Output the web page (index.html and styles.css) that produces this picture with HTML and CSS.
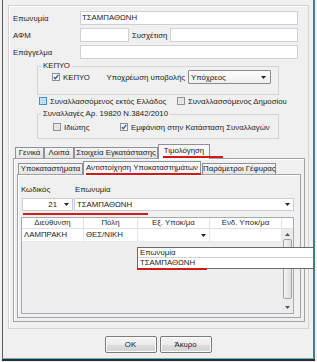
FILE: index.html
```html
<!DOCTYPE html>
<html lang="el">
<head>
<meta charset="utf-8">
<title>Συναλλασσόμενος</title>
<link rel="stylesheet" href="styles.css">
</head>
<body>
<div class="window">
  <div class="panel">
    <div class="frow">
      <span class="lbl">Επωνυμία</span>
      <div class="input w-full">ΤΣΑΜΠΑΘΩΝΗ</div>
    </div>
    <div class="frow">
      <span class="lbl">ΑΦΜ</span>
      <div class="input w-afm"></div>
      <span class="lbl-sys">Συσχέτιση</span>
      <div class="input w-sys"></div>
    </div>
    <div class="frow">
      <span class="lbl">Επάγγελμα</span>
      <div class="input w-full"></div>
    </div>

    <fieldset class="group group-kepyo">
      <legend>ΚΕΠΥΟ</legend>
      <div class="grow grow-kepyo">
        <span class="chk">
          <svg class="cb" width="8" height="8" viewBox="0 0 8 8"><rect x="0.5" y="0.5" width="7" height="7" fill="#f7f7f7" stroke="#8e8f8f"/><path d="M1.8 4.1L3.3 5.7L6.3 1.9" fill="none" stroke="#2c56a8" stroke-width="1.3"/></svg>
          <span>ΚΕΠΥΟ</span>
        </span>
        <span class="obl-lbl">Υποχρέωση υποβολής</span>
        <div class="select"><span>Υπόχρεος</span><svg class="arr" width="5" height="3" viewBox="0 0 5 3"><path d="M0 0H5L2.5 3z" fill="#222"/></svg></div>
      </div>
    </fieldset>

    <div class="crow">
      <span class="chk chk-wide">
        <svg class="cb" width="8" height="8" viewBox="0 0 8 8"><rect x="0.5" y="0.5" width="7" height="7" fill="#cfeafa" stroke="#4a8cc4"/><rect x="1.5" y="1.5" width="5" height="5" fill="#b8def5"/></svg>
        <span>Συναλλασσόμενος εκτός Ελλάδος</span>
      </span>
      <span class="chk">
        <svg class="cb" width="8" height="8" viewBox="0 0 8 8"><rect x="0.5" y="0.5" width="7" height="7" fill="#f4f4f4" stroke="#8e8f8f"/><rect x="1.5" y="1.5" width="5" height="5" fill="#e2e2e2"/></svg>
        <span>Συναλλασσόμενος Δημοσίου</span>
      </span>
    </div>

    <fieldset class="group group-syn">
      <legend>Συναλλαγές Αρ. 19820 Ν.3842/2010</legend>
      <div class="grow grow-syn">
        <span class="chk chk-idiotis">
          <svg class="cb" width="8" height="8" viewBox="0 0 8 8"><rect x="0.5" y="0.5" width="7" height="7" fill="#f4f4f4" stroke="#8e8f8f"/><rect x="1.5" y="1.5" width="5" height="5" fill="#e2e2e2"/></svg>
          <span>Ιδιώτης</span>
        </span>
        <span class="chk">
          <svg class="cb" width="8" height="8" viewBox="0 0 8 8"><rect x="0.5" y="0.5" width="7" height="7" fill="#f7f7f7" stroke="#8e8f8f"/><path d="M1.8 4.1L3.3 5.7L6.3 1.9" fill="none" stroke="#2c56a8" stroke-width="1.3"/></svg>
          <span>Εμφάνιση στην Κατάσταση Συναλλαγών</span>
        </span>
      </div>
    </fieldset>

    <div class="tabctl">
      <div class="tabs">
        <div class="tab t-gen">Γενικά</div>
        <div class="tab t-loipa">Λοιπά</div>
        <div class="tab t-stoix">Στοιχεία Εγκατάστασης</div>
        <div class="tab sel t-timol">Τιμολόγηση<span class="mark mark-timol"></span></div>
      </div>
      <div class="page page1">
        <div class="tabs tabs2">
          <div class="tab t-ypok">Υποκαταστήματα</div>
          <div class="tab sel t-antist">Αντιστοίχηση Υποκαταστημάτων<span class="mark mark-antist"></span></div>
          <div class="tab t-param">Παράμετροι Γέφυρας</div>
        </div>
        <div class="page page2">
          <div class="lrow">
            <span class="l-code">Κωδικός</span>
            <span>Επωνυμία</span>
          </div>
          <div class="combos">
            <div class="combo c-code"><span>21</span><svg class="arr" width="5" height="3" viewBox="0 0 5 3"><path d="M0 0H5L2.5 3z" fill="#222"/></svg></div>
            <div class="combo c-name"><span>ΤΣΑΜΠΑΘΩΝΗ</span><svg class="arr" width="5" height="3" viewBox="0 0 5 3"><path d="M0 0H5L2.5 3z" fill="#222"/></svg></div>
            <span class="mark mark-combo"></span>
          </div>
          <div class="grid">
            <div class="gmain">
              <div class="ghead">
                <div class="gc c1">Διεύθυνση</div>
                <div class="gc c2">Πόλη</div>
                <div class="gc c3">Εξ. Υποκ/μα</div>
                <div class="gc c4">Ενδ. Υποκ/μα</div>
              </div>
              <div class="grow-data">
                <div class="gd c1">ΛΑΜΠΡΑΚΗ</div>
                <div class="gd c2">ΘΕΣ/ΝΙΚΗ</div>
                <div class="gd c3 gd-combo"><svg class="arr" width="5" height="3" viewBox="0 0 5 3"><path d="M0 0H5L2.5 3z" fill="#222"/></svg></div>
                <div class="gd c4"></div>
              </div>
            </div>
            <div class="gsb">
              <div class="sb-head"></div>
              <div class="sb-btn"><svg width="5" height="3" viewBox="0 0 5 3"><path d="M0 3L2.5 0L5 3z" fill="#555"/></svg></div>
              <div class="sb-thumb"></div>
              <div class="sb-btn sb-down"><svg width="5" height="3" viewBox="0 0 5 3"><path d="M0 0H5L2.5 3z" fill="#555"/></svg></div>
            </div>
            <div class="popup">
              <div class="pop-head">Επωνυμία</div>
              <div class="pop-row">ΤΣΑΜΠΑΘΩΝΗ<span class="mark mark-pop"></span></div>
            </div>
          </div>
        </div>
      </div>
    </div>
  </div>
  <div class="btns">
    <button class="btn">OK</button>
    <button class="btn">Άκυρο</button>
  </div>
</div>
</body>
</html>
```

FILE: styles.css
```css
* { box-sizing: border-box; }
html, body { margin: 0; padding: 0; }
body {
  width: 317px;
  height: 362px;
  overflow: hidden;
  background: #f0f0f0;
  font-family: "Liberation Sans", Arial, sans-serif;
  font-size: 7.8px;
  color: #1a1a1a;
}

.window {
  margin-left: 2px;
  width: 313px;
  height: 359px;
  padding-top: 5px;
  border-left: 1px solid #5c5c5c;
  border-right: 2px solid #3d7f95;
  border-bottom: 1px solid #62b0d2;
  box-shadow: 0 2px 0 #2d2d2d;
}

.panel {
  margin-left: 5px;
  width: 301px;
  height: 324px;
  border: 1px solid #d3d3d3;
  box-shadow: inset 1px 1px 0 #fff;
  padding: 5px 0 0 4px;
}

.frow { display: flex; align-items: center; height: 14px; margin-bottom: 3px; }
.lbl { width: 67px; white-space: nowrap; }
.input {
  height: 14px;
  line-height: 12px;
  padding-left: 1px;
  background: #fff;
  border: 1px solid #cdd0d5;
  white-space: nowrap;
}
.w-full { width: 218px; }
.w-afm { width: 49px; }
.lbl-sys { width: 41px; padding-left: 3px; white-space: nowrap; }
.w-sys { width: 128px; }

.group {
  margin: 0 0 0 24px;
  width: 242px;
  padding: 0;
  border: 1px solid #d3d3d3;
  min-width: 0;
}
.group legend { margin-left: 3px; padding: 0 2px; line-height: 8px; white-space: nowrap; }
.group-kepyo { padding-bottom: 10px; }
.grow-kepyo { padding: 0 7px 0 14px; }
.group-syn { margin-top: 3px; padding: 2px 0 4px 0; }
.grow-syn { padding-left: 15px; }

.grow { display: flex; align-items: center; height: 14px; }
.chk { display: flex; align-items: center; gap: 3px; white-space: nowrap; }
.cb { display: block; flex: none; }
.chk-idiotis { width: 67px; }
.obl-lbl { margin-left: auto; margin-right: 3px; white-space: nowrap; }

.select {
  width: 83px;
  height: 14px;
  border: 1px solid #8b8b8b;
  border-radius: 1px;
  background: linear-gradient(#fdfdfd, #eeeeee);
  display: flex;
  align-items: center;
  justify-content: space-between;
  padding: 0 4px 0 2px;
}
.arr { display: block; flex: none; }

.crow { display: flex; align-items: center; height: 12px; padding-left: 26px; }
.chk-wide { width: 138px; }

/* tabs */
.tabctl { margin-top: 5px; width: 292px; }
.tabs { display: flex; align-items: flex-end; height: 14px; padding-left: 2px; }
.tab {
  height: 11px;
  line-height: 10px;
  border: 1px solid #8d9099;
  border-bottom: none;
  background: linear-gradient(#f5f5f5, #e3e3e3);
  text-align: center;
  white-space: nowrap;
}
.tab.sel {
  height: 15px;
  margin-bottom: -1px;
  line-height: 12px;
  background: #f7f7f7;
  position: relative;
  z-index: 1;
}
.t-gen { width: 29px; }
.t-loipa { width: 30px; }
.t-stoix { width: 84px; }
.t-timol { width: 52px; }

.page {
  border: 1px solid #9fa2a9;
  box-shadow: inset 1px 1px 0 #fff;
}
.page1 { height: 164px; padding-left: 3px; }
.tabs2 { height: 13px; margin-top: 2px; padding-left: 1px; }
.tabs2 .tab.sel { height: 14px; line-height: 11px; }
.t-ypok { width: 65px; }
.t-antist { width: 118px; }
.t-param { width: 74px; margin-left: 1px; }

.page2 { width: 284px; height: 144px; padding-left: 3px; }

.lrow { display: flex; margin-top: 11px; height: 8px; line-height: 8px; }
.l-code { width: 54px; }

.combos { display: flex; gap: 1px; margin-top: 4px; height: 13px; position: relative; }
.combo {
  height: 13px;
  background: #fff;
  border: 1px solid #c9ccd2;
  display: flex;
  align-items: center;
}
.c-code { width: 51px; margin-left: 1px; justify-content: flex-end; gap: 7px; padding-right: 3px; }
.c-name { width: 220px; justify-content: space-between; padding: 0 3px 0 2px; }

.grid {
  position: relative;
  margin-top: 6px;
  width: 273px;
  height: 97px;
  border: 1px solid #a6a9b0;
  background: #eeeeee;
  display: flex;
}
.gmain { width: 260px; }
.ghead, .grow-data { display: flex; background: #fff; }
.ghead { height: 11px; border-bottom: 1px solid #e1e1e1; }
.grow-data { height: 13px; }
.gc {
  border-right: 1px solid #e1e1e1;
  text-align: center;
  line-height: 10px;
  color: #2a2a2a;
  white-space: nowrap;
}
.gd {
  border-right: 1px solid #e8e8e8;
  border-bottom: 1px solid #e8e8e8;
  padding-left: 2px;
  line-height: 12px;
  white-space: nowrap;
}
.c1 { width: 62px; }
.c2 { width: 54px; }
.c3 { width: 72px; }
.c4 { width: 72px; }
.gd-combo { display: flex; align-items: center; justify-content: flex-end; padding-right: 3px; }

.gsb {
  width: 11px;
  display: flex;
  flex-direction: column;
  background: #ececec;
}
.sb-head { height: 11px; background: #fff; border-bottom: 1px solid #e1e1e1; }
.sb-btn { height: 10px; display: flex; align-items: center; justify-content: center; }
.sb-btn svg { display: block; }
.sb-thumb {
  height: 60px;
  margin: 0 1px;
  border: 1px solid #a3a3a3;
  border-radius: 2px;
  background: linear-gradient(90deg, #f4f4f4, #dedede);
}
.sb-down { margin-top: auto; margin-bottom: 1px; }

.popup {
  position: absolute;
  left: 115px;
  top: 29px;
  width: 177px;
  height: 22px;
  border: 1px solid #6a6a6a;
  background: #fff;
  z-index: 5;
}
.pop-head { height: 10px; line-height: 10px; padding-left: 2px; border-bottom: 1px solid #d3d3d3; }
.pop-row { height: 10px; line-height: 10px; padding-left: 2px; position: relative; }

/* red annotations */
.mark { position: absolute; height: 2px; background: #d11a1a; }
.mark-timol { left: 4px; top: 11px; width: 60px; }
.mark-antist { left: 2px; top: 11px; width: 115px; }
.mark-combo { left: 2px; top: 15px; width: 125px; }
.mark-pop { left: -1px; top: 10px; width: 70px; }

/* buttons */
.btns { display: flex; justify-content: center; gap: 3px; margin-top: 7px; }
.btn {
  width: 52px;
  height: 17px;
  padding: 0;
  font-family: "Liberation Sans", Arial, sans-serif;
  font-size: 7.8px;
  color: #1a1a1a;
  border: 1px solid #7a7a7a;
  border-radius: 2px;
  background: linear-gradient(#f4f4f4 0%, #ebebeb 50%, #dddddd 51%, #d2d2d2 100%);
  box-shadow: inset 0 0 0 1px #fbfbfb;
}
```
